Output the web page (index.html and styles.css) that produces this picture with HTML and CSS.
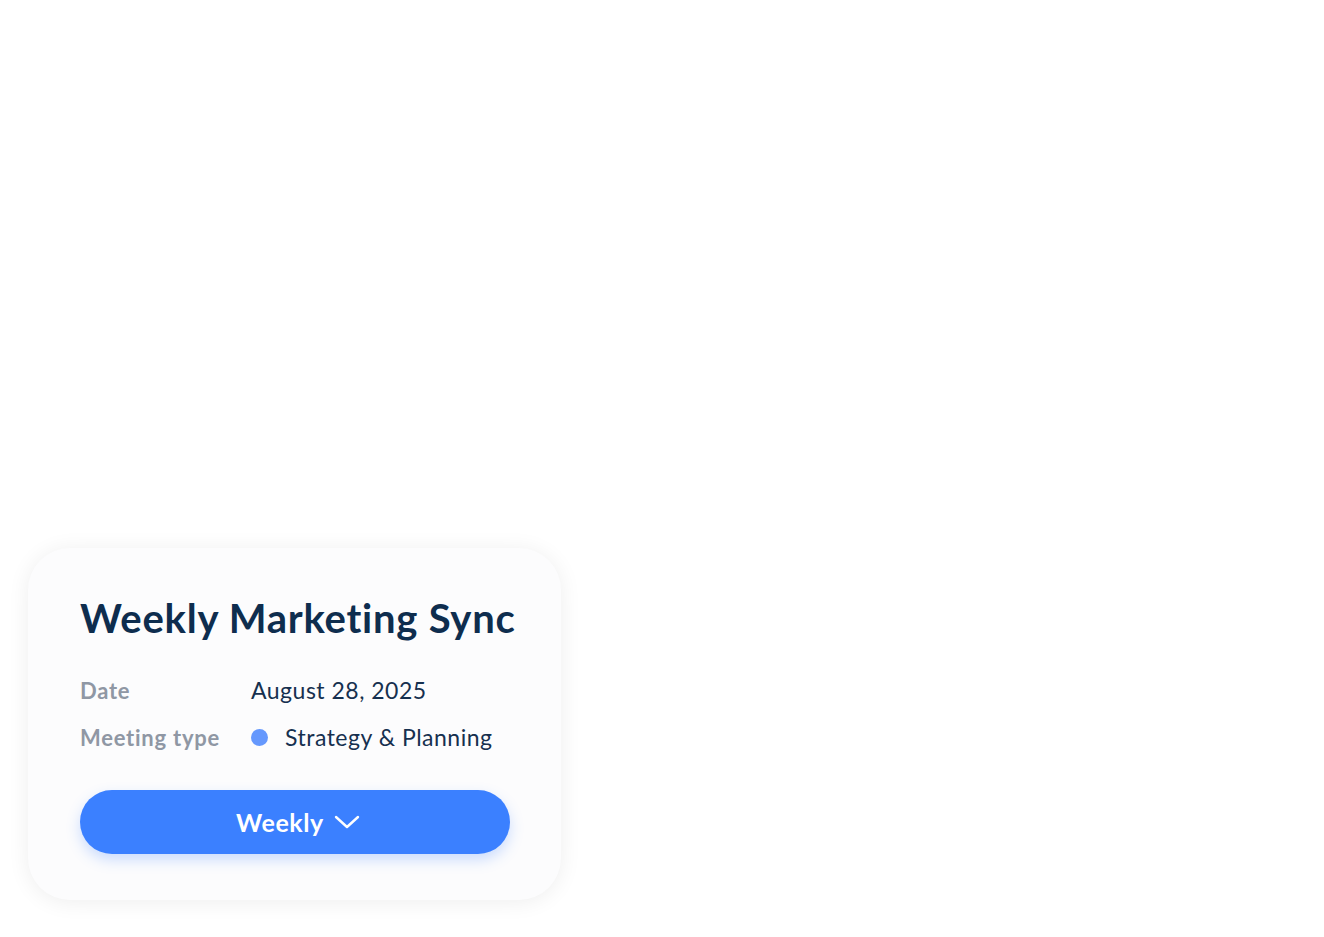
FILE: index.html
```html
<!DOCTYPE html>
<html>
<head>
<meta charset="utf-8">
<link rel="stylesheet" href="styles.css">
</head>
<body>
<div class="page">
  <div class="card">
    <h1 class="title">Weekly Marketing Sync</h1>
    <div class="rows">
      <div class="row">
        <span class="label">Date</span>
        <span class="value">August 28, 2025</span>
      </div>
      <div class="row">
        <span class="label">Meeting type</span>
        <span class="value with-dot"><span class="dot"></span>Strategy &amp; Planning</span>
      </div>
    </div>
    <button class="btn">
      <span>Weekly</span>
      <svg class="chev" width="26" height="16" viewBox="0 0 26 16"><path d="M2 3 L13 13 L24 3" fill="none" stroke="#fff" stroke-width="2.4" stroke-linecap="round" stroke-linejoin="round"/></svg>
    </button>
  </div>
</div>
</body>
</html>
```

FILE: styles.css
```css
html, body {
  margin: 0;
  padding: 0;
  background: #ffffff;
}
body {
  font-family: "Lato", "Noto Sans", sans-serif;
  font-variant-ligatures: none;
  width: 1324px;
  height: 937px;
  overflow: hidden;
}
.page {
  padding: 548px 0 0 28px;
}
.card {
  width: 533px;
  height: 352px;
  box-sizing: border-box;
  background: #fcfcfd;
  border-radius: 42px;
  box-shadow: 0 2px 22px rgba(0, 0, 0, 0.07);
  padding: 44px 30px 0 52px;
}
.title {
  margin: 0;
  font-size: 40px;
  font-weight: 700;
  color: #0e2d4e;
  line-height: 52px;
  letter-spacing: 0.75px;
  white-space: nowrap;
}
.rows {
  margin-top: 30px;
  display: flex;
  flex-direction: column;
  gap: 15px;
}
.row {
  display: flex;
  align-items: center;
  height: 32px;
}
.label {
  width: 171px;
  font-size: 22px;
  font-weight: 700;
  color: #8f97a4;
  letter-spacing: 0.75px;
}
.value {
  font-size: 23px;
  color: #16304f;
  display: flex;
  align-items: center;
  letter-spacing: 0.5px;
}
.dot {
  width: 17px;
  height: 17px;
  border-radius: 50%;
  background: #6598fd;
  margin-right: 17px;
  flex: none;
}
.btn {
  margin-top: 37px;
  width: 430px;
  height: 64px;
  border: none;
  border-radius: 32px;
  background: #3b80ff;
  box-shadow: 0 6px 14px rgba(59, 128, 255, 0.25);
  color: #fff;
  font-family: inherit;
  font-size: 25px;
  font-weight: 700;
  letter-spacing: 0.6px;
  display: flex;
  align-items: center;
  justify-content: center;
  gap: 10px;
  padding: 0 0 0 6px;
}
.chev {
  display: block;
}
```
